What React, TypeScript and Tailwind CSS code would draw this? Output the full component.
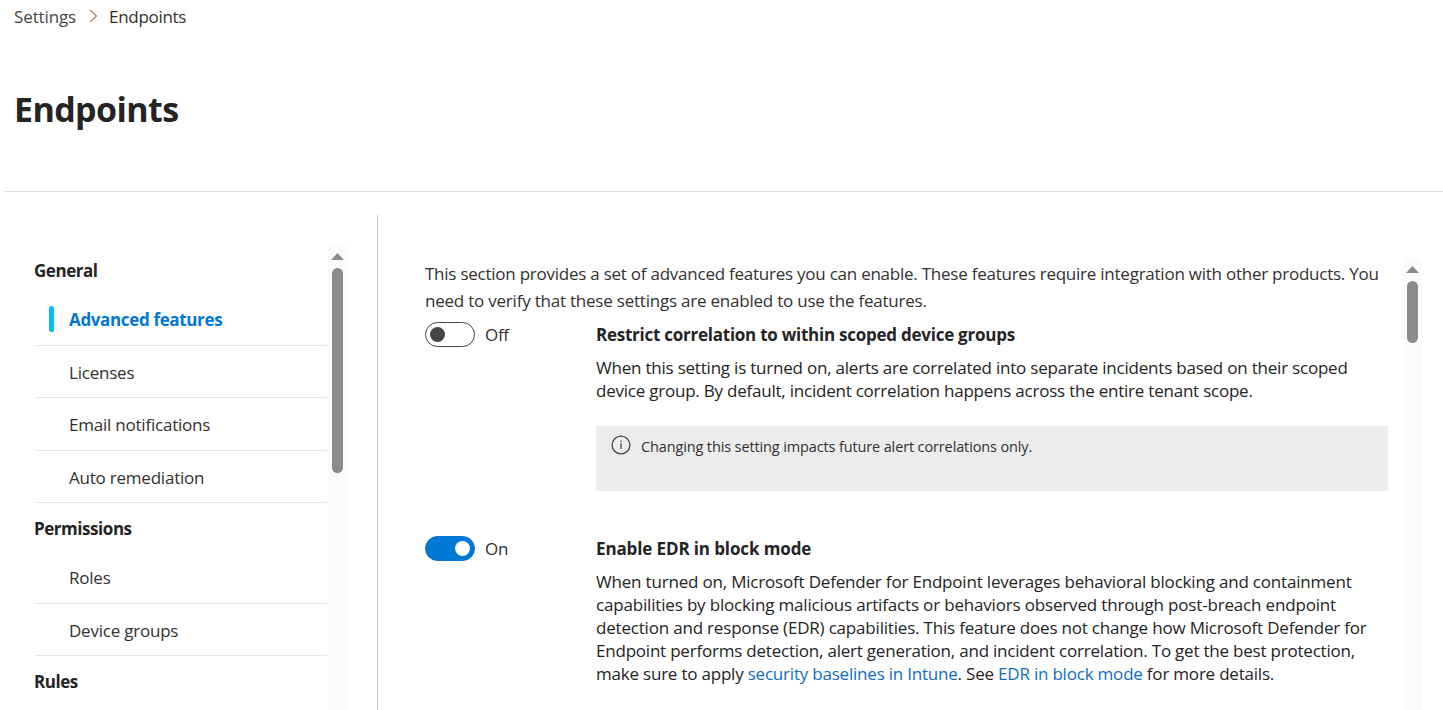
import type { ReactNode } from "react";

function Line({ children, className = "" }: { children: ReactNode; className?: string }) {
  return <span className={`block whitespace-nowrap ${className}`}>{children}</span>;
}

function ScrollBar({ thumb, className }: { thumb: string; className: string }) {
  return (
    <div className={`flex w-[19px] shrink-0 flex-col items-center bg-[#fbfbfb] ${className}`}>
      <svg width="13" height="7" viewBox="0 0 13 7" className="shrink-0">
        <path d="M6.5 0 L13 7 H0 Z" fill="#8b8b8b" />
      </svg>
      <div className={`mt-2 w-[11px] shrink-0 rounded-full bg-[#8b8b8b] ${thumb}`} />
    </div>
  );
}

function NavHeading({ label, className }: { label: string; className: string }) {
  return <h2 className={`flex items-center pt-[2px] font-bold tracking-[-0.45px] ${className}`}>{label}</h2>;
}

function NavItem({ label, active, className }: { label: string; active?: boolean; className: string }) {
  return (
    <a
      className={`flex items-center rounded-[3px] border-b border-[#e6e6e6] pl-[15px] ${
        active ? "font-bold tracking-[-0.35px] text-[#0078d4]" : "tracking-[-0.22px] text-[#323130]"
      } ${className}`}
    >
      <span className={`mr-[15px] mb-px h-[26px] w-[5px] rounded-full ${active ? "bg-[#00bcf2]" : ""}`} />
      <span className="whitespace-nowrap">{label}</span>
    </a>
  );
}

function Toggle({ on }: { on: boolean }) {
  return (
    <div className="flex h-[25px] w-[171px] shrink-0 items-center gap-[10px]">
      <button
        className={`flex h-[25px] w-[50px] items-center rounded-full border px-[4px] ${
          on ? "justify-end border-[#0078d4] bg-[#0078d4]" : "border-[#484644] bg-white"
        }`}
      >
        <span className={`size-[15px] rounded-full ${on ? "bg-white" : "bg-[#484644]"}`} />
      </button>
      <span className="text-[#323130]">{on ? "On" : "Off"}</span>
    </div>
  );
}

export default function App() {
  return (
    <div className="flex h-[710px] w-[1443px] flex-col overflow-hidden bg-white font-['Open_Sans',sans-serif] text-[17px] tracking-[-0.3px] text-[#242424]">
      <nav className="flex h-[34px] shrink-0 items-center pl-[14px] text-[#484644]">
        <span className="tracking-[-0.12px]">Settings</span>
        <svg width="9" height="14" viewBox="0 0 9 14" className="mr-[11px] mb-[3px] ml-[13px]" fill="none" stroke="#a08058" strokeWidth="1.1">
          <path d="M1 1 L7.5 7 L1 13" />
        </svg>
        <span className="text-[#323130]">Endpoints</span>
      </nav>
      <header className="ml-1 flex h-[158px] shrink-0 items-center border-b border-[#dcdcdc] pb-[6px] pl-[10px]">
        <h1 className="text-[34px] font-bold tracking-[-0.6px]">Endpoints</h1>
      </header>

      <div className="flex min-h-0 flex-1">
        <aside className="mt-[23px] flex w-[378px] shrink-0 border-r border-[#c8c8c8] pt-[30px] pl-[34px]">
          <div className="w-[294px] pt-px">
            <NavHeading label="General" className="h-[48px]" />
            <NavItem label="Advanced features" active className="h-[52px]" />
            <NavItem label="Licenses" className="h-[52px] pt-[2px]" />
            <NavItem label="Email notifications" className="h-[53px] pt-px" />
            <NavItem label="Auto remediation" className="h-[52px] pt-[2px]" />
            <NavHeading label="Permissions" className="h-[50px]" />
            <NavItem label="Roles" className="h-[51px] pb-px" />
            <NavItem label="Device groups" className="h-[52px] pt-[2px]" />
            <NavHeading label="Rules" className="h-[50px]" />
          </div>
          <ScrollBar thumb="h-[205px]" className="pt-2" />
        </aside>

        <main className="flex min-w-0 flex-1 pt-[66px] pl-[47px]">
          <div className="w-[978px] pt-[2px]">
            <p className="leading-[27px] text-[#323130]">
              <Line className="tracking-[-0.242px]">This section provides a set of advanced features you can enable. These features require integration with other products. You</Line>
              <Line className="tracking-[-0.22px]">need to verify that these settings are enabled to use the features.</Line>
            </p>

            <section className="mt-[8px] flex">
              <Toggle on={false} />
              <div className="w-[792px]">
                <h3 className="leading-[25px] font-bold tracking-[-0.25px]">Restrict correlation to within scoped device groups</h3>
                <p className="mt-[9px] leading-[23px]">
                  <Line className="tracking-[-0.215px]">When this setting is turned on, alerts are correlated into separate incidents based on their scoped</Line>
                  <Line className="tracking-[-0.225px]">device group. By default, incident correlation happens across the entire tenant scope.</Line>
                </p>
                <div className="mt-[24px] flex h-[65px] items-start bg-[#ececec] pt-[9px] pl-[15px] text-[14.5px] tracking-[-0.13px] text-[#323130]">
                  <svg width="20" height="20" viewBox="0 0 20 20" fill="none" stroke="#484644" strokeWidth="1.3">
                    <circle cx="10" cy="10" r="8.9" />
                    <path d="M10 8.2 V14 M10 5.4 V6.9" />
                  </svg>
                  <span className="ml-[10px] leading-[23px]">Changing this setting impacts future alert correlations only.</span>
                </div>
              </div>
            </section>

            <section className="mt-[45px] flex">
              <Toggle on />
              <div className="w-[792px]">
                <h3 className="leading-[25px] font-bold tracking-[-0.12px]">Enable EDR in block mode</h3>
                <p className="mt-[9px] leading-[23px]">
                  <Line className="tracking-[-0.19px]">When turned on, Microsoft Defender for Endpoint leverages behavioral blocking and containment</Line>
                  <Line className="tracking-[-0.172px]">capabilities by blocking malicious artifacts or behaviors observed through post-breach endpoint</Line>
                  <Line className="tracking-[-0.192px]">detection and response (EDR) capabilities. This feature does not change how Microsoft Defender for</Line>
                  <Line className="tracking-[-0.215px]">Endpoint performs detection, alert generation, and incident correlation. To get the best protection,</Line>
                  <Line className="tracking-[-0.21px]">
                    make sure to apply <a className="text-[#106ebe]">security baselines in Intune</a>. See{" "}
                    <a className="text-[#106ebe]">EDR in block mode</a> for more details.
                  </Line>
                </p>
              </div>
            </section>
          </div>
          <ScrollBar thumb="h-[62px]" className="pt-2" />
        </main>
      </div>
    </div>
  );
}
